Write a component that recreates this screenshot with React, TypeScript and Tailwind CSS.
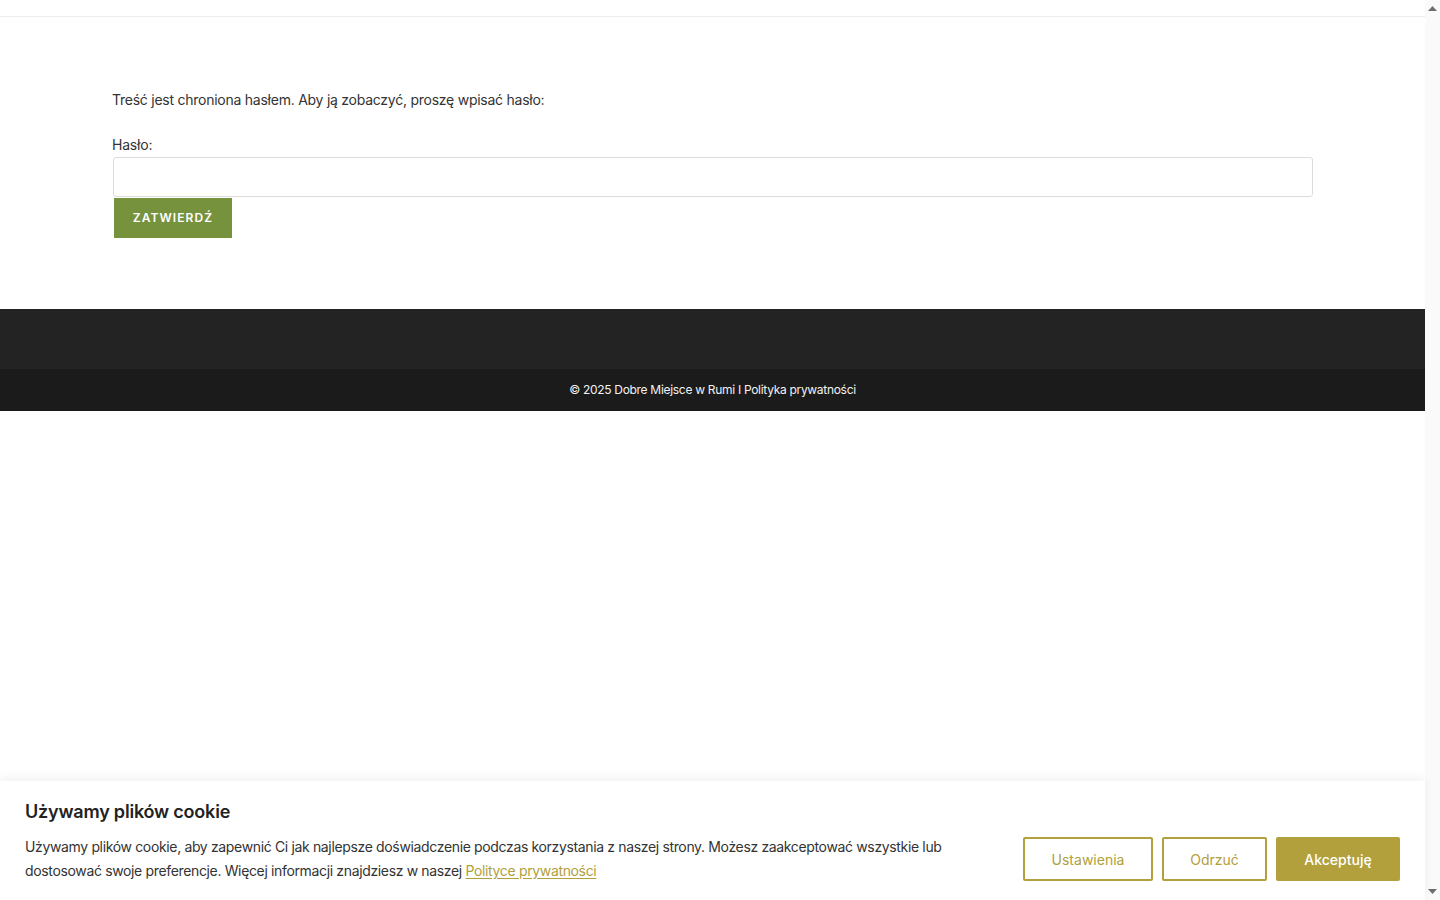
export default function App() {
  const font = { fontFamily: "Inter, 'Noto Sans', sans-serif" };
  return (
    <div className="flex h-[900px] w-full overflow-hidden bg-white text-[#333]" style={font}>
      {/* page */}
      <div className="relative flex-1 min-w-0">
        {/* header strip */}
        <div className="h-[17px] border-b border-[#ececec]" />

        {/* protected content */}
        <main className="px-[112px] pt-[73px] pb-[71px]">
          <p className="text-[14px] leading-[20px] tracking-[-0.25px] text-[#333]">
            Treść jest chroniona hasłem. Aby ją zobaczyć, proszę wpisać hasło:
          </p>
          <label className="mt-[25px] block text-[14px] leading-[20px] tracking-[-0.2px] text-[#333]">
            Hasło:
          </label>
          <input
            type="password"
            className="ml-[1px] mt-[2px] block h-[40px] w-[1200px] rounded-[3px] border border-[#dcdcdc] bg-white px-3 outline-none"
          />
          <button className="ml-[2px] mt-[1px] flex h-[40px] w-[118px] items-center justify-center bg-[#77923d] text-[12px] font-semibold uppercase tracking-[1.1px] text-white">
            Zatwierdź
          </button>
        </main>

        {/* footer */}
        <footer>
          <div className="h-[60px] bg-[#232323]" />
          <div className="flex h-[42px] items-center justify-center bg-[#1b1b1b] text-[12px] tracking-[-0.3px] text-[#f2f2f2]">
            © 2025 Dobre Miejsce w Rumi I Polityka prywatności
          </div>
        </footer>

        {/* cookie banner */}
        <div className="absolute bottom-0 left-0 right-0 h-[119px] bg-white px-[25px] pt-[19px] shadow-[0_-3px_10px_rgba(0,0,0,0.06)]">
          <h2 className="text-[18px] font-semibold leading-[24px] tracking-[-0.2px] text-[#222]">
            Używamy plików cookie
          </h2>
          <div className="mt-[11px] flex items-start justify-between">
            <p className="w-[940px] text-[14px] leading-[24px] tracking-[-0.35px] text-[#333]">
              Używamy plików cookie, aby zapewnić Ci jak najlepsze doświadczenie podczas korzystania z naszej strony. Możesz zaakceptować wszystkie lub dostosować swoje preferencje. Więcej informacji znajdziesz w naszej{" "}
              <a className="text-[#b1a03b] underline underline-offset-2">Polityce prywatności</a>
            </p>
            <div className="mt-[2px] flex gap-[9px]">
              <button className="h-[44px] w-[130px] rounded-[2px] border-2 border-[#b1a03b] text-[14px] text-[#b1a03b]">
                Ustawienia
              </button>
              <button className="h-[44px] w-[105px] rounded-[2px] border-2 border-[#b1a03b] text-[14px] text-[#b1a03b]">
                Odrzuć
              </button>
              <button className="h-[44px] w-[124px] rounded-[2px] bg-[#b1a03b] text-[14px] font-medium text-white">
                Akceptuję
              </button>
            </div>
          </div>
        </div>
      </div>

      {/* scrollbar */}
      <div className="flex w-[15px] flex-col items-center justify-between bg-[#fafafa] py-[6px]">
        <svg width="9" height="5" viewBox="0 0 9 5">
          <path d="M0 5 L4.5 0 L9 5 Z" fill="#6e6e6e" />
        </svg>
        <svg width="9" height="5" viewBox="0 0 9 5">
          <path d="M0 0 L4.5 5 L9 0 Z" fill="#6e6e6e" />
        </svg>
      </div>
    </div>
  );
}
